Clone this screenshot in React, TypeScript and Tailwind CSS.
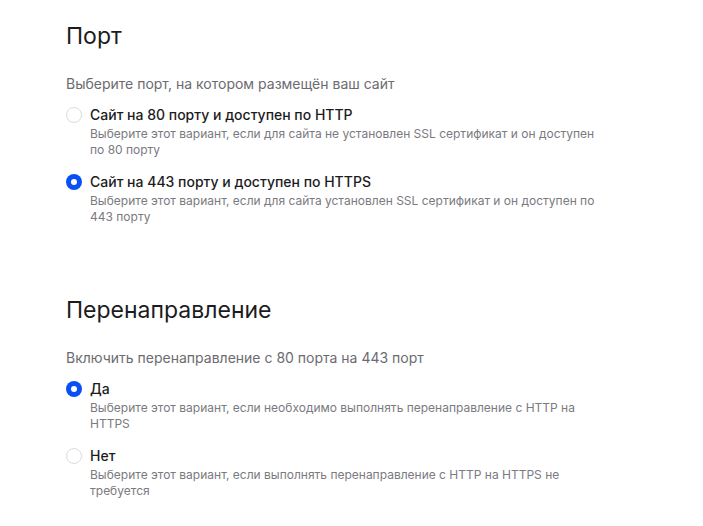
import React, { useState } from 'react';

interface Option {
  value: string;
  label: string;
  description: string;
}

interface SectionProps {
  title: string;
  subtitle: string;
  options: Option[];
  value: string;
  onChange: (v: string) => void;
  className?: string;
}

function Radio({ checked }: { checked: boolean }) {
  return checked ? (
    <span className="flex h-4 w-4 shrink-0 items-center justify-center rounded-full bg-[#0a4ff5]">
      <span className="h-1.5 w-1.5 rounded-full bg-white" />
    </span>
  ) : (
    <span className="h-4 w-4 shrink-0 rounded-full border border-[#dcdcdc] bg-white" />
  );
}

function RadioSection({ title, subtitle, options, value, onChange, className }: SectionProps) {
  return (
    <section className={className}>
      <h2 className="text-[23px] leading-8 text-[#1c1c1e]">{title}</h2>
      <p className="mt-[22px] text-sm leading-5 text-[#6b6b70]">{subtitle}</p>
      <div className="mt-[11px] flex flex-col gap-[14px]">
        {options.map((opt) => (
          <label
            key={opt.value}
            className="flex cursor-pointer items-start gap-2"
            onClick={() => onChange(opt.value)}
          >
            <span className="flex h-5 items-center">
              <Radio checked={value === opt.value} />
            </span>
            <span className="flex w-[515px] flex-col">
              <span className="text-sm font-medium leading-5 text-[#1c1c1e]">{opt.label}</span>
              <span className="mt-px text-xs leading-4 text-[#7a7a80]">{opt.description}</span>
            </span>
          </label>
        ))}
      </div>
    </section>
  );
}

export default function App() {
  const [port, setPort] = useState('443');
  const [redirect, setRedirect] = useState('yes');

  return (
    <div className="min-h-screen bg-white pl-[66px] pt-[20px] font-['Inter','Noto_Sans',sans-serif]">
      <RadioSection
        title="Порт"
        subtitle="Выберите порт, на котором размещён ваш сайт"
        value={port}
        onChange={setPort}
        options={[
          {
            value: '80',
            label: 'Сайт на 80 порту и доступен по HTTP',
            description:
              'Выберите этот вариант, если для сайта не установлен SSL сертификат и он доступен по 80 порту',
          },
          {
            value: '443',
            label: 'Сайт на 443 порту и доступен по HTTPS',
            description:
              'Выберите этот вариант, если для сайта установлен SSL сертификат и он доступен по 443 порту',
          },
        ]}
      />
      <RadioSection
        className="mt-[69px]"
        title="Перенаправление"
        subtitle="Включить перенаправление с 80 порта на 443 порт"
        value={redirect}
        onChange={setRedirect}
        options={[
          {
            value: 'yes',
            label: 'Да',
            description:
              'Выберите этот вариант, если необходимо выполнять перенаправление с HTTP на HTTPS',
          },
          {
            value: 'no',
            label: 'Нет',
            description:
              'Выберите этот вариант, если выполнять перенаправление с HTTP на HTTPS не требуется',
          },
        ]}
      />
    </div>
  );
}
